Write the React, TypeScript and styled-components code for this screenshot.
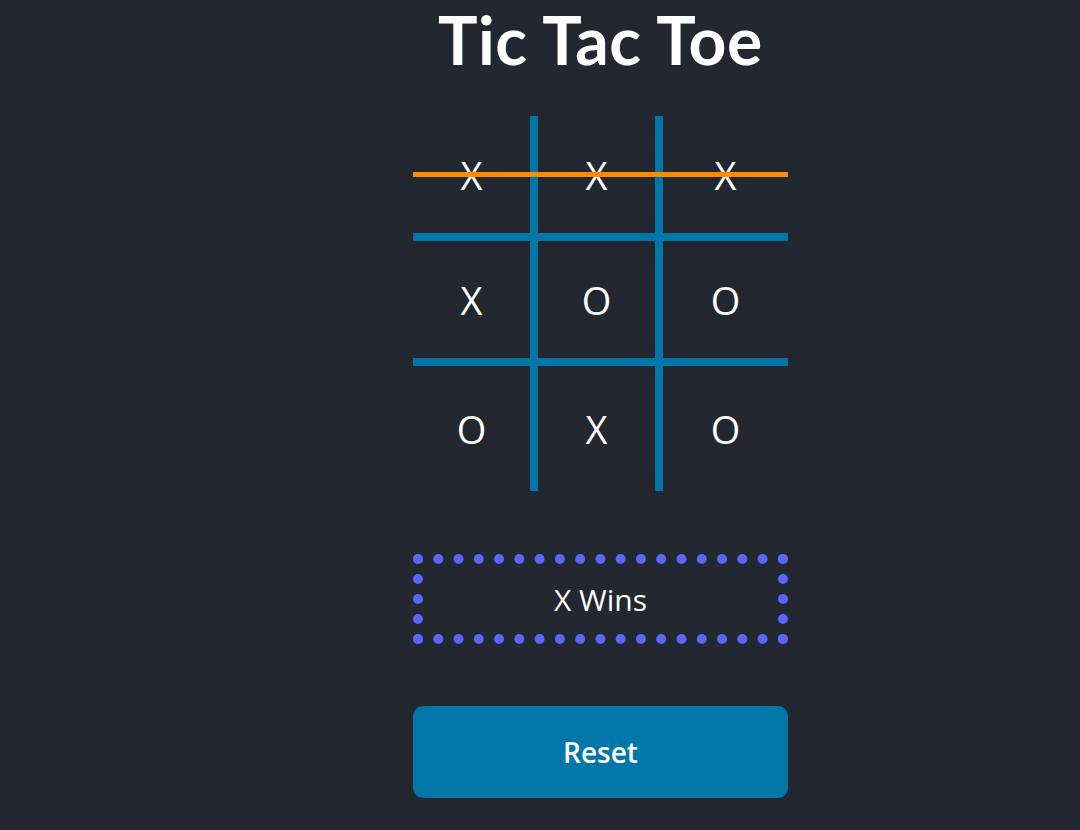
import React from "react";
import styled, { createGlobalStyle } from "styled-components";

const GlobalStyle = createGlobalStyle`
  html, body {
    margin: 0;
    padding: 0;
    background: #23272f;
  }
  body {
    font-family: "Open Sans", "Noto Sans", sans-serif;
    color: #ffffff;
  }
`;

const Page = styled.div`
  min-height: 830px;
  box-sizing: border-box;
  padding-left: 121px;
  display: flex;
  flex-direction: column;
  align-items: center;
`;

const Title = styled.h1`
  margin: 0 0 37px;
  padding: 0 10px;
  font-family: Lato, "Open Sans", sans-serif;
  font-size: 66px;
  line-height: normal;
  font-weight: 700;
  letter-spacing: 0.6px;
  color: #ffffff;
`;

const Board = styled.div`
  position: relative;
  display: grid;
  grid-template-columns: repeat(3, 125px);
  grid-template-rows: repeat(3, 125px);
`;

const Cell = styled.div<{ $right: boolean; $bottom: boolean }>`
  box-sizing: border-box;
  display: flex;
  align-items: center;
  justify-content: center;
  font-size: 38px;
  color: #ffffff;
  border-right: ${(p) => (p.$right ? "8px solid #0077a8" : "none")};
  border-bottom: ${(p) => (p.$bottom ? "8px solid #0077a8" : "none")};
`;

const Strike = styled.div<{ $row: number }>`
  position: absolute;
  left: 0;
  right: 0;
  top: ${(p) => 56 + p.$row * 125}px;
  height: 5px;
  background: #ff8c00;
`;

const Status = styled.div`
  margin-top: 63px;
  width: 375px;
  height: 90px;
  box-sizing: border-box;
  border: 10px dotted #5867ff;
  display: flex;
  align-items: center;
  justify-content: center;
  font-size: 30px;
  color: #ffffff;
`;

const ResetButton = styled.button`
  margin-top: 62px;
  width: 375px;
  height: 92px;
  border: none;
  border-radius: 10px;
  background: #0077a8;
  color: #ffffff;
  font-family: "Open Sans", "Noto Sans", sans-serif;
  font-size: 28px;
  font-weight: 600;
  cursor: pointer;
`;

const cells = ["X", "X", "X", "X", "O", "O", "O", "X", "O"];

export default function App() {
  return (
    <>
      <GlobalStyle />
      <Page>
        <Title>Tic Tac Toe</Title>
        <Board>
          {cells.map((v, i) => (
            <Cell key={i} $right={i % 3 < 2} $bottom={Math.floor(i / 3) < 2}>
              {v}
            </Cell>
          ))}
          <Strike $row={0} />
        </Board>
        <Status>X Wins</Status>
        <ResetButton>Reset</ResetButton>
      </Page>
    </>
  );
}
